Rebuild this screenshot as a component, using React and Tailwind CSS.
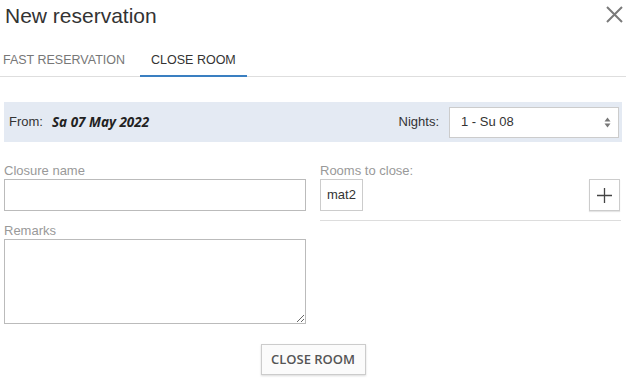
import React from "react";

const sans = "font-['Liberation_Sans',Arial,sans-serif]";
const open = "font-['Open_Sans',sans-serif]";

const CloseIcon = () => (
  <svg width="17" height="17" viewBox="0 0 17 17" className="mt-[6px] mr-[3px]">
    <path d="M1 1 L16 16 M16 1 L1 16" stroke="#7a7a7a" strokeWidth="2" fill="none" />
  </svg>
);

const SortArrows = () => (
  <svg width="7" height="11" viewBox="0 0 7 11">
    <path d="M3.5 0.5 L6.5 4.5 L0.5 4.5 Z M3.5 10.5 L6.5 6.5 L0.5 6.5 Z" fill="#777" />
  </svg>
);

const PlusIcon = () => (
  <svg width="15" height="15" viewBox="0 0 15 15">
    <path d="M7.5 0 V15 M0 7.5 H15" stroke="#444" strokeWidth="1.3" fill="none" />
  </svg>
);

export default function App() {
  return (
    <div className={`w-[626px] h-[380px] bg-white text-[#333] overflow-hidden ${sans}`}>
      <div className="flex justify-between items-start">
        <h1 className="pl-[5px] pt-[4px] text-[21px] leading-[24px] font-normal text-[#333]">
          New reservation
        </h1>
        <CloseIcon />
      </div>

      <div className="mt-[25px] flex border-b border-[#dedede] text-[12.5px] leading-[15px]">
        <div className="pl-[3px] pr-[15px] pb-[8px] text-[#777]">FAST RESERVATION</div>
        <div className="px-[11px] pb-[7px] border-b-2 border-[#3a7fc1] -mb-[1px] text-[#333]">
          CLOSE ROOM
        </div>
      </div>

      <div className="pl-[4px] pr-[4px]">
        <div className="mt-[25px] h-[40px] bg-[#e4eaf3] flex items-center text-[13px] pr-[3px]">
          <span className="pl-[5px]">From:</span>
          <span className={`ml-[9px] italic font-bold text-[13.5px] text-[#222] ${open}`}>
            Sa 07 May 2022
          </span>
          <span className="ml-auto mr-[10px]">Nights:</span>
          <div className="w-[170px] h-[31px] bg-white border border-[#ccc] flex items-center justify-between pl-[11px] pr-[7px]">
            <span>1 - Su 08</span>
            <SortArrows />
          </div>
        </div>

        <div className="grid grid-cols-2 gap-x-[14px] mt-[21px] text-[13px]">
          <div>
            <label className="block h-[16px] leading-[16px] text-[#999]">Closure name</label>
            <input
              type="text"
              className="block w-full h-[32px] border border-[#bbb] outline-none px-2"
            />
            <label className="block mt-[12px] h-[16px] leading-[16px] text-[#999]">Remarks</label>
            <textarea className="block w-full h-[85px] border border-[#bbb] outline-none px-2" />
          </div>
          <div className="pr-[1px]">
            <label className="block h-[16px] leading-[16px] text-[#999]">Rooms to close:</label>
            <div className="flex justify-between border-b border-[#ddd] pb-[9px]">
              <div className="h-[32px] px-[6px] border border-[#ccc] flex items-center">mat2</div>
              <button className="mr-[1px] w-[31px] h-[32px] border border-[#ccc] bg-white flex items-center justify-center shadow-[0_1px_1px_rgba(0,0,0,0.1)]">
                <PlusIcon />
              </button>
            </div>
          </div>
        </div>

        <div className="flex justify-center mt-[20px]">
          <button
            className={`w-[105px] h-[31px] border border-[#ccc] bg-[#fbfbfb] shadow-[0_1px_2px_rgba(0,0,0,0.15)] text-[13px] font-semibold text-[#555] ${open}`}
          >
            CLOSE ROOM
          </button>
        </div>
      </div>
    </div>
  );
}
